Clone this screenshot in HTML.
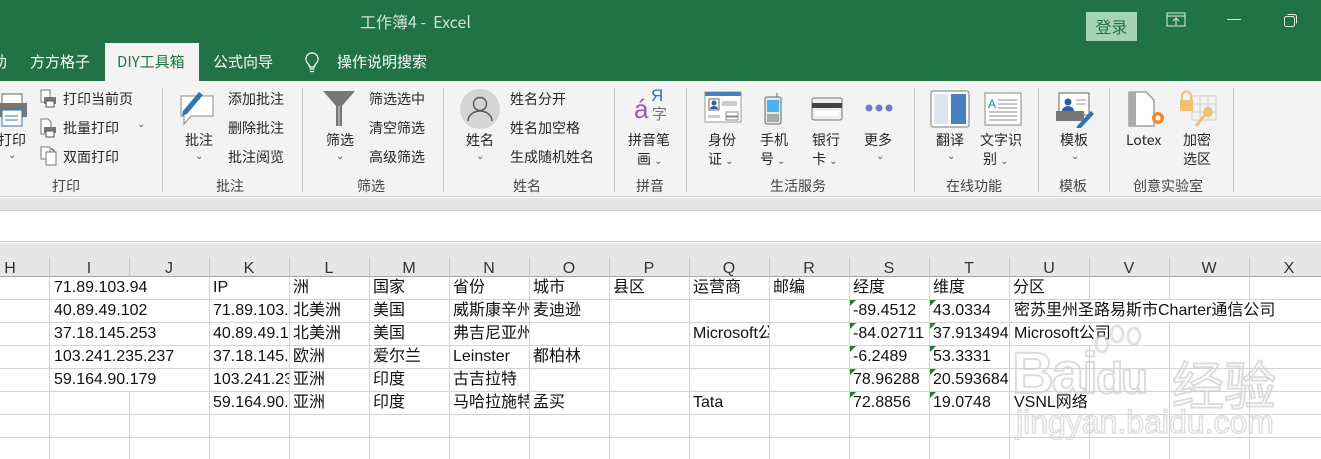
<!DOCTYPE html>
<html><head><meta charset="utf-8">
<style>
*{margin:0;padding:0;box-sizing:border-box}
body{width:1321px;height:459px;overflow:hidden;position:relative;background:#fff;font-family:"Liberation Sans","Noto Sans CJK SC",sans-serif;}
.a{position:absolute;white-space:nowrap}
.rt{font-size:14px;color:#262626;font-family:"Noto Sans CJK SC","Liberation Sans",sans-serif}
.sep{position:absolute;top:88px;width:1px;height:104px;background:#c8c8c8}
.gl{position:absolute;top:176px;font-size:14px;color:#444;font-family:"Noto Sans CJK SC",sans-serif}
.car{font-size:10px;color:#555}
.c{position:absolute;font-size:16px;color:#111;white-space:nowrap;overflow:hidden;font-family:"Liberation Sans","Noto Sans CJK SC",sans-serif;line-height:22px;padding-left:4px}
.w{background:#fff}
.tri{position:absolute;width:0;height:0;border-top:6px solid #1e7d32;border-right:6px solid transparent}
</style></head><body>
<div class="a" style="left:0;top:0;width:1321px;height:81px;background:#217346"></div>
<div class="a" style="left:360px;top:9px;font-size:16px;color:#cfe3d6;font-family:'Noto Sans CJK SC',sans-serif">工作簿4 - &nbsp;Excel</div>
<div class="a" style="left:1086px;top:12px;width:51px;height:29px;background:#a5d4b5;color:#217346;font-size:16px;text-align:center;line-height:29px;font-family:'Noto Sans CJK SC',sans-serif">登录</div>
<svg class="a" style="left:1166px;top:12px" width="20" height="16"><rect x="1" y="1" width="18" height="13" fill="none" stroke="#e0eee5"/><line x1="1" y1="4" x2="19" y2="4" stroke="#e0eee5"/><path d="M10 13V6M7 9l3-3 3 3" fill="none" stroke="#e0eee5"/></svg>
<div class="a" style="left:1227px;top:19px;width:14px;height:1px;background:#e0eee5"></div>
<svg class="a" style="left:1283px;top:12px" width="16" height="16"><rect x="1.5" y="4.5" width="10" height="10" rx="2" fill="none" stroke="#e0eee5"/><path d="M4.5 2.5h7a2 2 0 0 1 2 2v7" fill="none" stroke="#e0eee5"/></svg>
<div class="a" style="left:-8px;top:51px;font-size:15px;color:#fff;font-family:'Noto Sans CJK SC',sans-serif">助</div>
<div class="a" style="left:30px;top:51px;font-size:15px;color:#fff;font-family:'Noto Sans CJK SC',sans-serif">方方格子</div>
<div class="a" style="left:105px;top:43px;width:94px;height:40px;background:#f3f3f3"></div>
<div class="a" style="left:117px;top:51px;font-size:15px;color:#217346;font-family:'Noto Sans CJK SC',sans-serif">DIY工具箱</div>
<div class="a" style="left:213px;top:51px;font-size:15px;color:#fff;font-family:'Noto Sans CJK SC',sans-serif">公式向导</div>
<svg class="a" style="left:303px;top:51px" width="18" height="24"><path d="M9 2a6 6 0 0 0-4 10.5c1 1 1.5 2 1.5 3.5h5c0-1.5.5-2.5 1.5-3.5A6 6 0 0 0 9 2z" fill="none" stroke="#fff" stroke-width="1.3"/><path d="M6.5 18h5M7 20.5h4" stroke="#fff" stroke-width="1.3"/></svg>
<div class="a" style="left:337px;top:51px;font-size:15px;color:#fff;font-family:'Noto Sans CJK SC',sans-serif">操作说明搜索</div>
<div class="a" style="left:0;top:81px;width:1321px;height:116px;background:#f3f3f3;border-bottom:1px solid #d6d6d6"></div>
<div class="sep" style="left:162px"></div><div class="sep" style="left:302px"></div><div class="sep" style="left:443px"></div><div class="sep" style="left:614px"></div><div class="sep" style="left:686px"></div><div class="sep" style="left:914px"></div><div class="sep" style="left:1038px"></div><div class="sep" style="left:1109px"></div><div class="sep" style="left:1233px"></div>
<svg class="a" style="left:0;top:92px" width="28" height="36"><rect x="2" y="2" width="20" height="10" fill="#fff" stroke="#666"/><rect x="0" y="11" width="27" height="14" fill="#777"/><rect x="2" y="18" width="20" height="16" fill="#fff" stroke="#2e75b6"/><line x1="5" y1="24" x2="18" y2="24" stroke="#2e75b6"/><line x1="5" y1="28" x2="18" y2="28" stroke="#2e75b6"/></svg>
<div class="a rt" style="left:-2px;top:130px">打印</div>
<div class="a car" style="left:8px;top:150px">⌄</div>
<svg class="a" style="left:40px;top:89px" width="18" height="20"><rect x="1" y="1" width="9" height="12" fill="#fff" stroke="#777"/><rect x="4" y="8" width="12" height="7" fill="#777"/><rect x="6" y="12" width="8" height="6" fill="#fff" stroke="#555"/></svg>
<div class="a rt" style="left:63px;top:89px">打印当前页</div>
<svg class="a" style="left:40px;top:118px" width="18" height="20"><path d="M1 1h7l3 3v12H1z" fill="#fff" stroke="#777"/><rect x="4" y="9" width="12" height="6" fill="#777"/><rect x="6" y="13" width="8" height="6" fill="#fff" stroke="#555"/></svg>
<div class="a rt" style="left:63px;top:118px">批量打印</div><div class="a car" style="left:137px;top:119px">⌄</div>
<svg class="a" style="left:40px;top:146px" width="18" height="20"><rect x="1" y="1" width="9" height="12" fill="#fff" stroke="#777"/><rect x="6" y="6" width="10" height="13" fill="#fff" stroke="#777"/><path d="M11 3a3 3 0 0 1 3 3" fill="none" stroke="#2e75b6" stroke-width="1.5"/></svg>
<div class="a rt" style="left:63px;top:147px">双面打印</div>
<div class="gl" style="left:52px">打印</div>
<svg class="a" style="left:177px;top:87px" width="42" height="42"><path d="M4 9h32v20H14l-7 8v-8H4z" fill="#fff" stroke="#888"/><path d="M6 24L22 5l4 3L10 27l-5 2z" fill="#2e75b6"/></svg>
<div class="a rt" style="left:185px;top:130px">批注</div><div class="a car" style="left:195px;top:151px">⌄</div>
<div class="a rt" style="left:228px;top:89px">添加批注</div>
<div class="a rt" style="left:228px;top:118px">删除批注</div>
<div class="a rt" style="left:228px;top:147px">批注阅览</div>
<div class="gl" style="left:216px">批注</div>
<svg class="a" style="left:322px;top:90px" width="34" height="38"><path d="M1 1h32L20 16v20h-6V16z" fill="#777"/><path d="M16 16h2v20h-2z" fill="#aaa"/></svg>
<div class="a rt" style="left:326px;top:130px">筛选</div><div class="a car" style="left:336px;top:151px">⌄</div>
<div class="a rt" style="left:369px;top:89px">筛选选中</div>
<div class="a rt" style="left:369px;top:118px">清空筛选</div>
<div class="a rt" style="left:369px;top:147px">高级筛选</div>
<div class="gl" style="left:357px">筛选</div>
<svg class="a" style="left:459px;top:88px" width="42" height="42"><circle cx="21" cy="21" r="20" fill="#d4d4d4"/><circle cx="21" cy="16" r="6.5" fill="none" stroke="#555" stroke-width="1.4"/><path d="M9 33a12 10 0 0 1 24 0" fill="none" stroke="#555" stroke-width="1.4"/></svg>
<div class="a rt" style="left:466px;top:130px">姓名</div><div class="a car" style="left:476px;top:151px">⌄</div>
<div class="a rt" style="left:510px;top:89px">姓名分开</div>
<div class="a rt" style="left:510px;top:118px">姓名加空格</div>
<div class="a rt" style="left:510px;top:147px">生成随机姓名</div>
<div class="gl" style="left:513px">姓名</div>
<div class="a" style="left:634px;top:94px;font-size:26px;color:#9b59b6;font-family:'Liberation Sans',sans-serif">á</div>
<div class="a" style="left:651px;top:86px;font-size:17px;color:#2e75b6;font-family:'Liberation Sans',sans-serif">Я</div>
<div class="a" style="left:652px;top:103px;font-size:15px;color:#777;font-family:'Noto Sans CJK SC',sans-serif">字</div>
<div class="a rt" style="left:628px;top:130px">拼音笔</div>
<div class="a rt" style="left:637px;top:149px">画 <span class="car">⌄</span></div>
<div class="gl" style="left:636px">拼音</div>
<svg class="a" style="left:704px;top:91px" width="38" height="33"><rect x="1" y="1" width="36" height="30" fill="#fff" stroke="#999"/><rect x="1" y="1" width="36" height="4" fill="#4a7fc1"/><rect x="5" y="8" width="10" height="11" fill="#fff" stroke="#666"/><circle cx="10" cy="12" r="2.5" fill="#2e5fa0"/><path d="M6 18a4 3 0 0 1 8 0z" fill="#2e5fa0"/><rect x="18" y="10" width="15" height="5" fill="#ccc"/><rect x="4" y="24" width="12" height="3" fill="#ccc"/><rect x="22" y="21" width="12" height="4" fill="#fff" stroke="#888"/><rect x="22" y="26" width="12" height="3" fill="#fff" stroke="#888"/></svg>
<div class="a rt" style="left:708px;top:130px">身份</div><div class="a rt" style="left:708px;top:149px">证 <span class="car">⌄</span></div>
<svg class="a" style="left:764px;top:93px" width="18" height="32"><rect x="1" y="4" width="16" height="27" rx="2" fill="#e8e8e8" stroke="#666"/><rect x="3" y="7" width="12" height="12" fill="#4db3f0"/><rect x="3" y="21" width="12" height="8" fill="#aaa"/><line x1="13" y1="4" x2="13" y2="0" stroke="#666"/></svg>
<div class="a rt" style="left:760px;top:130px">手机</div><div class="a rt" style="left:760px;top:149px">号 <span class="car">⌄</span></div>
<svg class="a" style="left:811px;top:97px" width="32" height="24"><rect x="1" y="1" width="30" height="22" rx="2" fill="#eee" stroke="#777"/><rect x="1" y="6" width="30" height="5" fill="#444"/><rect x="4" y="14" width="24" height="5" fill="#fff"/></svg>
<div class="a rt" style="left:812px;top:130px">银行</div><div class="a rt" style="left:812px;top:149px">卡 <span class="car">⌄</span></div>
<svg class="a" style="left:864px;top:103px" width="30" height="10"><circle cx="5" cy="5" r="3.5" fill="#6b7fc9"/><circle cx="15" cy="5" r="3.5" fill="#6b7fc9"/><circle cx="25" cy="5" r="3.5" fill="#6b7fc9"/></svg>
<div class="a rt" style="left:864px;top:130px">更多</div><div class="a car" style="left:876px;top:151px">⌄</div>
<div class="gl" style="left:770px">生活服务</div>
<svg class="a" style="left:930px;top:90px" width="40" height="38"><rect x="1" y="1" width="38" height="36" rx="2" fill="#fff" stroke="#777"/><rect x="4" y="4" width="14" height="30" fill="#dce4ee"/><rect x="21" y="4" width="15" height="30" fill="#4a7fc1"/></svg>
<div class="a rt" style="left:936px;top:130px">翻译</div><div class="a car" style="left:947px;top:151px">⌄</div>
<svg class="a" style="left:984px;top:92px" width="38" height="34"><rect x="1" y="1" width="36" height="32" fill="#fff" stroke="#888"/><text x="4" y="16" font-size="12" fill="#2e75b6" font-family="Liberation Sans">A</text><path d="M14 8h19M14 12h19M14 16h19M5 20h28M5 24h28M5 28h28" stroke="#888"/></svg>
<div class="a rt" style="left:980px;top:130px">文字识</div><div class="a rt" style="left:983px;top:149px">别 <span class="car">⌄</span></div>
<div class="gl" style="left:946px">在线功能</div>
<svg class="a" style="left:1055px;top:92px" width="40" height="36"><rect x="4" y="1" width="30" height="22" fill="#fff" stroke="#666"/><circle cx="13" cy="10" r="3.5" fill="#2e5fa0"/><path d="M7 19a6 5 0 0 1 12 0z" fill="#2e5fa0"/><path d="M21 8h10M21 12h10" stroke="#999"/><rect x="1" y="19" width="28" height="10" fill="#777"/><path d="M22 34l14-15 3 3-14 15-4 1z" fill="#2e75b6"/></svg>
<div class="a rt" style="left:1060px;top:130px">模板</div><div class="a car" style="left:1071px;top:151px">⌄</div>
<div class="gl" style="left:1059px">模板</div>
<svg class="a" style="left:1128px;top:91px" width="42" height="38"><path d="M1 1h17l8 8v26H1z" fill="#fff" stroke="#777"/><rect x="1" y="1" width="7" height="34" fill="#aaa"/><circle cx="30" cy="27" r="6" fill="#f08a30"/><circle cx="30" cy="27" r="2.5" fill="#fff"/></svg>
<div class="a rt" style="left:1126px;top:130px">Lotex</div>
<svg class="a" style="left:1178px;top:88px" width="42" height="42"><rect x="14" y="8" width="24" height="24" fill="none" stroke="#ccc"/><path d="M14 16h24M14 24h24M22 8v24M30 8v24" stroke="#ccc"/><rect x="2" y="12" width="13" height="11" fill="#f0c070"/><path d="M4 12V8a4.5 4.5 0 0 1 9 0v4" fill="none" stroke="#f0c070" stroke-width="2"/><circle cx="30" cy="24" r="5" fill="#f0c070"/><path d="M27 27l-9 11" stroke="#f0c070" stroke-width="3"/></svg>
<div class="a rt" style="left:1183px;top:130px">加密</div><div class="a rt" style="left:1183px;top:149px">选区</div>
<div class="gl" style="left:1133px">创意实验室</div>
<div class="a" style="left:0;top:198px;width:1321px;height:13px;background:#e6e6e6;border-bottom:1px solid #d0d0d0"></div>
<div class="a" style="left:0;top:212px;width:1321px;height:30px;background:#fff;border-bottom:1px solid #c8c8c8"></div>
<div class="a" style="left:0;top:243px;width:1321px;height:34px;background:#e6e6e6;border-bottom:1px solid #a8a8a8"></div>
<svg class="a" style="left:0;top:0" width="1321" height="459">
<g stroke="#d4d4d4" stroke-width="1">
<line x1="0" y1="299.5" x2="1321" y2="299.5"/><line x1="0" y1="322.5" x2="1321" y2="322.5"/><line x1="0" y1="345.5" x2="1321" y2="345.5"/><line x1="0" y1="368.5" x2="1321" y2="368.5"/><line x1="0" y1="391.5" x2="1321" y2="391.5"/><line x1="0" y1="414.5" x2="1321" y2="414.5"/><line x1="0" y1="437.5" x2="1321" y2="437.5"/>
<line x1="49.5" y1="277" x2="49.5" y2="459"/><line x1="129.5" y1="277" x2="129.5" y2="459"/><line x1="209.5" y1="277" x2="209.5" y2="459"/><line x1="289.5" y1="277" x2="289.5" y2="459"/><line x1="369.5" y1="277" x2="369.5" y2="459"/><line x1="449.5" y1="277" x2="449.5" y2="459"/><line x1="529.5" y1="277" x2="529.5" y2="459"/><line x1="609.5" y1="277" x2="609.5" y2="459"/><line x1="689.5" y1="277" x2="689.5" y2="459"/><line x1="769.5" y1="277" x2="769.5" y2="459"/><line x1="849.5" y1="277" x2="849.5" y2="459"/><line x1="929.5" y1="277" x2="929.5" y2="459"/><line x1="1009.5" y1="277" x2="1009.5" y2="459"/><line x1="1089.5" y1="277" x2="1089.5" y2="459"/><line x1="1169.5" y1="277" x2="1169.5" y2="459"/><line x1="1249.5" y1="277" x2="1249.5" y2="459"/>
</g>
<g stroke="#c6c6c6"><line x1="49.5" y1="257" x2="49.5" y2="277"/><line x1="129.5" y1="257" x2="129.5" y2="277"/><line x1="209.5" y1="257" x2="209.5" y2="277"/><line x1="289.5" y1="257" x2="289.5" y2="277"/><line x1="369.5" y1="257" x2="369.5" y2="277"/><line x1="449.5" y1="257" x2="449.5" y2="277"/><line x1="529.5" y1="257" x2="529.5" y2="277"/><line x1="609.5" y1="257" x2="609.5" y2="277"/><line x1="689.5" y1="257" x2="689.5" y2="277"/><line x1="769.5" y1="257" x2="769.5" y2="277"/><line x1="849.5" y1="257" x2="849.5" y2="277"/><line x1="929.5" y1="257" x2="929.5" y2="277"/><line x1="1009.5" y1="257" x2="1009.5" y2="277"/><line x1="1089.5" y1="257" x2="1089.5" y2="277"/><line x1="1169.5" y1="257" x2="1169.5" y2="277"/><line x1="1249.5" y1="257" x2="1249.5" y2="277"/></g>
<g font-family="Liberation Sans" font-size="16" fill="#333" text-anchor="middle">
<text x="10" y="273">H</text><text x="89" y="273">I</text><text x="169" y="273">J</text><text x="249" y="273">K</text><text x="329" y="273">L</text><text x="409" y="273">M</text><text x="489" y="273">N</text><text x="569" y="273">O</text><text x="649" y="273">P</text><text x="729" y="273">Q</text><text x="809" y="273">R</text><text x="889" y="273">S</text><text x="969" y="273">T</text><text x="1049" y="273">U</text><text x="1129" y="273">V</text><text x="1209" y="273">W</text><text x="1289" y="273">X</text>
</g></svg>
<div class="c w" style="left:50px;top:277px;width:159px">71.89.103.94</div>
<div class="c" style="left:209px;top:277px;width:80px">IP</div>
<div class="c" style="left:289px;top:277px;width:80px">洲</div>
<div class="c" style="left:369px;top:277px;width:80px">国家</div>
<div class="c" style="left:449px;top:277px;width:80px">省份</div>
<div class="c" style="left:529px;top:277px;width:80px">城市</div>
<div class="c" style="left:609px;top:277px;width:80px">县区</div>
<div class="c" style="left:689px;top:277px;width:80px">运营商</div>
<div class="c" style="left:769px;top:277px;width:80px">邮编</div>
<div class="c" style="left:849px;top:277px;width:80px">经度</div>
<div class="c" style="left:929px;top:277px;width:80px">维度</div>
<div class="c" style="left:1009px;top:277px;width:80px">分区</div>
<div class="c w" style="left:50px;top:300px;width:159px">40.89.49.102</div>
<div class="c" style="left:209px;top:300px;width:80px">71.89.103.94</div>
<div class="c" style="left:289px;top:300px;width:80px">北美洲</div>
<div class="c" style="left:369px;top:300px;width:80px">美国</div>
<div class="c" style="left:449px;top:300px;width:80px">威斯康辛州</div>
<div class="c" style="left:529px;top:300px;width:80px">麦迪逊</div>
<div class="c" style="left:849px;top:300px;width:80px">-89.4512</div>
<div class="c" style="left:929px;top:300px;width:80px">43.0334</div>
<div class="c w" style="left:1010px;top:300px;width:311px">密苏里州圣路易斯市Charter通信公司</div>
<div class="c w" style="left:50px;top:323px;width:159px">37.18.145.253</div>
<div class="c" style="left:209px;top:323px;width:80px">40.89.49.102</div>
<div class="c" style="left:289px;top:323px;width:80px">北美洲</div>
<div class="c" style="left:369px;top:323px;width:80px">美国</div>
<div class="c" style="left:449px;top:323px;width:80px">弗吉尼亚州</div>
<div class="c" style="left:689px;top:323px;width:80px">Microsoft公司</div>
<div class="c" style="left:849px;top:323px;width:80px">-84.02711</div>
<div class="c" style="left:929px;top:323px;width:80px">37.913494</div>
<div class="c w" style="left:1010px;top:323px;width:110px">Microsoft公司</div>
<div class="c w" style="left:50px;top:346px;width:159px">103.241.235.237</div>
<div class="c" style="left:209px;top:346px;width:80px">37.18.145.253</div>
<div class="c" style="left:289px;top:346px;width:80px">欧洲</div>
<div class="c" style="left:369px;top:346px;width:80px">爱尔兰</div>
<div class="c" style="left:449px;top:346px;width:80px">Leinster</div>
<div class="c" style="left:529px;top:346px;width:80px">都柏林</div>
<div class="c" style="left:849px;top:346px;width:80px">-6.2489</div>
<div class="c" style="left:929px;top:346px;width:80px">53.3331</div>
<div class="c w" style="left:50px;top:369px;width:159px">59.164.90.179</div>
<div class="c" style="left:209px;top:369px;width:80px">103.241.235.237</div>
<div class="c" style="left:289px;top:369px;width:80px">亚洲</div>
<div class="c" style="left:369px;top:369px;width:80px">印度</div>
<div class="c" style="left:449px;top:369px;width:80px">古吉拉特</div>
<div class="c" style="left:849px;top:369px;width:80px">78.96288</div>
<div class="c" style="left:929px;top:369px;width:80px">20.593684</div>
<div class="c" style="left:209px;top:392px;width:80px">59.164.90.179</div>
<div class="c" style="left:289px;top:392px;width:80px">亚洲</div>
<div class="c" style="left:369px;top:392px;width:80px">印度</div>
<div class="c" style="left:449px;top:392px;width:80px">马哈拉施特拉</div>
<div class="c" style="left:529px;top:392px;width:80px">孟买</div>
<div class="c" style="left:689px;top:392px;width:80px">Tata</div>
<div class="c" style="left:849px;top:392px;width:80px">72.8856</div>
<div class="c" style="left:929px;top:392px;width:80px">19.0748</div>
<div class="c w" style="left:1010px;top:392px;width:90px">VSNL网络</div>
<div class="tri" style="left:850px;top:300px"></div><div class="tri" style="left:930px;top:300px"></div>
<div class="tri" style="left:850px;top:323px"></div><div class="tri" style="left:930px;top:323px"></div>
<div class="tri" style="left:850px;top:346px"></div><div class="tri" style="left:930px;top:346px"></div>
<div class="tri" style="left:850px;top:369px"></div><div class="tri" style="left:930px;top:369px"></div>
<div class="tri" style="left:850px;top:392px"></div><div class="tri" style="left:930px;top:392px"></div>
<div class="a" style="left:1012px;top:340px;font-size:58px;color:transparent;-webkit-text-stroke:2px rgba(205,205,205,0.7);font-family:'Liberation Sans',sans-serif;font-weight:bold;letter-spacing:-2px">Bai<span style="font-size:44px">du</span></div>
<div class="a" style="left:1172px;top:345px;font-size:52px;color:transparent;-webkit-text-stroke:2px rgba(205,205,205,0.7);font-family:'Noto Sans CJK SC',sans-serif">经验</div>
<div class="a" style="left:1016px;top:404px;font-size:32px;color:transparent;-webkit-text-stroke:1.5px rgba(210,210,210,0.7);font-family:'Liberation Sans',sans-serif">jingyan.baidu.com</div>
<svg class="a" style="left:1090px;top:322px" width="60" height="40"><g fill="none" stroke="rgba(205,205,205,0.6)" stroke-width="3"><ellipse cx="12" cy="22" rx="6" ry="8"/><ellipse cx="27" cy="12" rx="6" ry="8"/><ellipse cx="44" cy="14" rx="6" ry="8"/></g></svg>
</body></html>
